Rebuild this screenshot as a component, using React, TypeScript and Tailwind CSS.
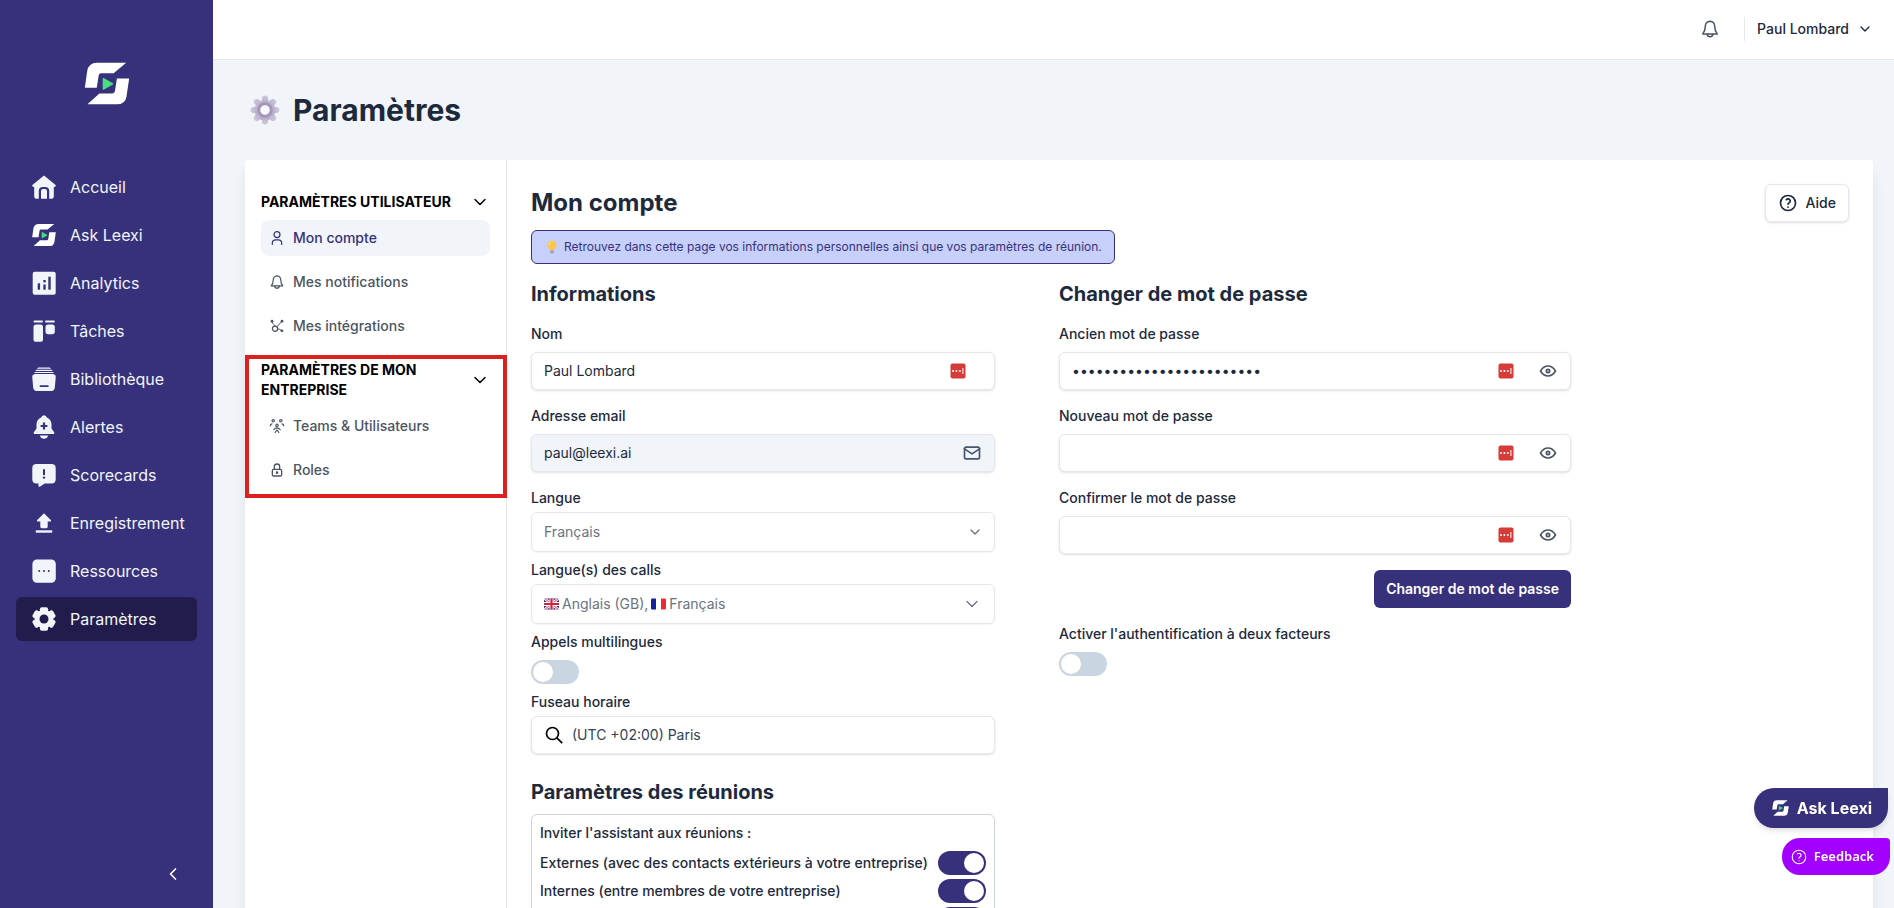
import type { ReactNode } from "react";
import { ChevronDown, ChevronLeft } from "lucide-react";
import { TbEye, TbHelp, TbLock, TbMail } from "react-icons/tb";

function LeexiLogo({ className }: { className?: string }) {
  return (
    <svg viewBox="0 0 136 130" className={className} aria-hidden>
      <path d="M126 2 88 34H50q-6 0-7 6l-6 38H1L8 28Q12 2 38 2Z" fill="#fff" />
      <path d="M98 50h37l-8 54q-4 24-29 24H9l36-33h39q7 0 8-7Z" fill="#fff" />
      <path d="M57 50v32l28-16Z" fill="#4ade80" stroke="#4ade80" strokeWidth="4" strokeLinejoin="round" />
    </svg>
  );
}

function NavSvg({ children }: { children: ReactNode }) {
  return (
    <svg viewBox="0 0 24 24" className="size-6 shrink-0" fill="#f1f5f9" aria-hidden>
      {children}
    </svg>
  );
}

const navItems: { label: string; icon: ReactNode; active?: boolean }[] = [
  {
    label: "Accueil",
    icon: (
      <NavSvg>
        <path d="M12 .5 23.6 10q.5 1.6-1 2h-.8v9.6q0 2.2-2.2 2.2h-2.4V16q0-4-4-4h-2.4q-4 0-4 4v7.8H4.4q-2.2 0-2.2-2.2V12h-.8q-1.5-.4-1-2Z" />
        <path d="M9 23.8V16q0-2 2-2h2q2 0 2 2v7.8Z" />
      </NavSvg>
    ),
  },
  { label: "Ask Leexi", icon: <LeexiLogo className="size-6 shrink-0" /> },
  {
    label: "Analytics",
    icon: (
      <NavSvg>
        <rect x="0.7" y="0.7" width="23" height="23" rx="2" />
        <g fill="#37317c">
          <rect x="5.7" y="12.3" width="2.4" height="6.4" />
          <rect x="11.3" y="9" width="2.4" height="2.4" />
          <rect x="11.3" y="13.5" width="2.4" height="5.2" />
          <rect x="16.3" y="5.7" width="2.4" height="13" />
        </g>
      </NavSvg>
    ),
  },
  {
    label: "Tâches",
    icon: (
      <NavSvg>
        <rect x="1.5" y="1.4" width="9.5" height="2.2" rx="1" />
        <rect x="13" y="1.4" width="9.8" height="2.2" rx="1" />
        <rect x="1.5" y="5.4" width="9.5" height="17.4" rx="2.6" />
        <rect x="13.5" y="5.4" width="9.3" height="9.8" rx="2.6" />
      </NavSvg>
    ),
  },
  {
    label: "Bibliothèque",
    icon: (
      <NavSvg>
        <path d="M6.5.4h11q1.2.2 1.6 1.3H4.9Q5.3.6 6.5.4ZM4.6 2.7h14.8q1 .2 1.3 1.2H3.3q.3-1 1.3-1.2ZM3.3 4.9h17.4q1 .2 1.3 1.2H2q.3-1 1.3-1.2Z" />
        <path d="M3 7.1h18q3 .5 2.7 3.4l-.9 10.3q-.4 3-3.3 3.2h-15q-2.9-.2-3.3-3.2L.3 10.5Q0 7.6 3 7.1Z" />
        <rect x="7.5" y="18.3" width="9.3" height="1.6" rx="0.8" fill="#37317c" />
      </NavSvg>
    ),
  },
  {
    label: "Alertes",
    icon: (
      <NavSvg>
        <path d="M12 .2q2.3.2 2.8 2.3 4.2 1.7 4.7 6.5v4.5l2.8 4q.4 1.5-1 1.5H2.7q-1.4 0-1-1.5l2.8-4V9Q5 4.2 9.2 2.500 9.7.4 12 .2Z" />
        <path d="M7.8 20.6h8.4Q15 23.8 12 23.8t-4.2-3.2Z" />
        <path d="M10.9 7.6h2.2v2.3h2.3v2.2h-2.3v2.3h-2.2v-2.3H8.6V9.9h2.3Z" fill="#37317c" />
      </NavSvg>
    ),
  },
  {
    label: "Scorecards",
    icon: (
      <NavSvg>
        <path d="M4.5 1h15q4.2 0 4.2 4.2v11q0 4.2-4.2 4.2h-6.8l-4.9 3.3q-1.3.6-1.3-.9v-2.4h-2Q.3 20.4.3 16.2v-11Q.3 1 4.5 1Z" />
        <rect x="11" y="6" width="2" height="6.3" rx="0.8" fill="#37317c" />
        <circle cx="12" cy="14.6" r="1.2" fill="#37317c" />
      </NavSvg>
    ),
  },
  {
    label: "Enregistrement",
    icon: (
      <NavSvg>
        <path d="M12 2.2 19 9.3q.5 1.2-.8 1.2h-2.5v5.3q0 1.4-1.4 1.4H9.7q-1.4 0-1.4-1.4v-5.3H5.8q-1.3 0-.8-1.2Z" />
        <rect x="3.8" y="19.3" width="16.4" height="2.4" />
      </NavSvg>
    ),
  },
  {
    label: "Ressources",
    icon: (
      <NavSvg>
        <rect x="0.4" y="0.4" width="23.4" height="23.4" rx="4.5" />
        <g fill="#37317c">
          <circle cx="7.2" cy="12" r="1" />
          <circle cx="12" cy="12" r="1" />
          <circle cx="16.8" cy="12" r="1" />
        </g>
      </NavSvg>
    ),
  },
  {
    label: "Paramètres",
    icon: (
      <NavSvg>
        <circle cx="12" cy="12" r="9.3" />
        <rect x="7.9" y="0.2" width="8.2" height="23.6" rx="2" />
        <rect x="7.9" y="0.2" width="8.2" height="23.6" rx="2" transform="rotate(60 12 12)" />
        <rect x="7.9" y="0.2" width="8.2" height="23.6" rx="2" transform="rotate(120 12 12)" />
        <circle cx="12" cy="12" r="4.5" fill="#211c4b" />
      </NavSvg>
    ),
    active: true,
  },
];

function LineSvg({ className, children }: { className?: string; children: ReactNode }) {
  return (
    <svg
      viewBox="0 0 16 16"
      className={className}
      fill="none"
      stroke="currentColor"
      strokeWidth="1.2"
      strokeLinecap="round"
      strokeLinejoin="round"
      aria-hidden
    >
      {children}
    </svg>
  );
}

function UserIcon() {
  return (
    <LineSvg className="size-4">
      <circle cx="8" cy="4.6" r="3" />
      <path d="M3.3 14.5v-1.3q0-3.4 3.4-3.4h2.6q3.4 0 3.4 3.4v1.3" />
    </LineSvg>
  );
}

function BellIcon({ className = "size-4" }: { className?: string }) {
  return (
    <LineSvg className={className}>
      <path d="M8 1.8q3.7.3 3.8 4.4 0 3.4 2 5.700H2.2q2-2.300 2-5.700Q4.300 2.100 8 1.800Z" />
      <path d="M5.700 12.100q.2 2.100 2.300 2.100t2.300-2.100" />
    </LineSvg>
  );
}

function IntegrationsIcon() {
  return (
    <LineSvg className="size-4">
      <circle cx="6" cy="10.8" r="2.6" />
      <g fill="currentColor" stroke="none">
        <circle cx="3" cy="3.2" r="1.4" />
        <circle cx="13" cy="3.2" r="1.4" />
        <circle cx="12.9" cy="12.8" r="1.4" />
      </g>
      <path d="M3 3.2q0 2.600 1.800 3.200 1.200.6 1.200 1.800M7.800 8.900 13 3.200M8.600 10.800q2.600-.1 4 1.800" strokeWidth="1" />
    </LineSvg>
  );
}

function TeamIcon() {
  return (
    <LineSvg className="size-4">
      <circle cx="4.2" cy="2.8" r="1.2" />
      <circle cx="11.8" cy="2.8" r="1.2" />
      <circle cx="8" cy="7.4" r="1.2" />
      <path d="M1.300 7.800q0-1.700 1.700-1.900M14.700 7.800q0-1.700-1.700-1.900M4.800 11.800q.8-1.900 3.200-2 2.400.1 3.200 2M8 12l-1.800 2.400M8 12l1.800 2.400" />
    </LineSvg>
  );
}

function SearchIcon() {
  return (
    <svg viewBox="0 0 20 20" className="size-5" fill="none" stroke="#000" strokeWidth="1.7" aria-hidden>
      <circle cx="8.500" cy="8.500" r="6" />
      <path d="m12.800 12.800 5.400 5.400" />
    </svg>
  );
}

type SettingsLink = { label: string; icon: ReactNode; active?: boolean };

const userLinks: SettingsLink[] = [
  { label: "Mon compte", icon: <UserIcon />, active: true },
  { label: "Mes notifications", icon: <BellIcon /> },
  { label: "Mes intégrations", icon: <IntegrationsIcon /> },
];

const companyLinks: SettingsLink[] = [
  { label: "Teams & Utilisateurs", icon: <TeamIcon /> },
  { label: "Roles", icon: <TbLock className="size-4" aria-hidden /> },
];

function SettingsGroup({ title, links }: { title: string; links: SettingsLink[] }) {
  return (
    <section>
      <button
        type="button"
        className="flex w-full items-center justify-between text-left text-sm font-bold text-black uppercase"
      >
        <span className="max-w-[195px]">{title}</span>
        <ChevronDown className="size-5" strokeWidth={1.75} aria-hidden />
      </button>
      <ul className="mt-2 space-y-2">
        {links.map((link) => (
          <li key={link.label}>
            <a
              href="#"
              className={
                link.active
                  ? "flex h-9 items-center gap-2 rounded-lg bg-slate-100 px-2 text-sm font-medium text-[#37317c]"
                  : "flex h-9 items-center gap-2 rounded-lg px-2 text-sm font-medium text-[#4b5563]"
              }
            >
              {link.icon}
              {link.label}
            </a>
          </li>
        ))}
      </ul>
    </section>
  );
}

function GearEmoji() {
  return (
    <svg viewBox="0 0 32 32" className="size-8" aria-hidden>
      <defs>
        <linearGradient id="gear" x1="0" y1="0" x2="0" y2="1">
          <stop offset="0" stopColor="#cfcad9" />
          <stop offset="1" stopColor="#b3a6cc" />
        </linearGradient>
      </defs>
      <g fill="url(#gear)">
        <circle cx="16" cy="16" r="10.5" />
        {[0, 45, 90, 135, 180, 225, 270, 315].map((angle) => (
          <rect key={angle} x="13" y="1.5" width="6" height="9" rx="3" transform={`rotate(${angle} 16 16)`} />
        ))}
      </g>
      <circle cx="16" cy="16" r="6.3" fill="#f8fafc" stroke="#a396b6" strokeWidth="3" />
    </svg>
  );
}

function BulbEmoji() {
  return (
    <svg viewBox="0 0 16 16" className="size-4" aria-hidden>
      <path d="M8 1.500q4.300.3 4.400 4.300 0 2-1.500 3.600-.7.800-.9 1.900H6q-.2-1.100-.9-1.900-1.500-1.600-1.500-3.600Q3.700 1.800 8 1.500Z" fill="#fdc64b" />
      <path d="M6.500 3q-1.500.8-1.500 2.500" stroke="#fff0b8" fill="none" strokeLinecap="round" />
      <path d="M6.200 11.300h3.600v2q-.3 1.400-1.800 1.400t-1.800-1.400Z" fill="#a99bb8" />
    </svg>
  );
}

function FlagGB() {
  return (
    <svg viewBox="0 0 15 12" className="h-3 w-[15px]" aria-hidden>
      <clipPath id="gb">
        <rect y="0.5" width="15" height="11" rx="1.5" />
      </clipPath>
      <g clipPath="url(#gb)">
        <rect width="15" height="12" fill="#26337f" />
        <path d="m0 0 15 12M15 0 0 12" stroke="#fff" strokeWidth="2.6" />
        <path d="m0 0 15 12M15 0 0 12" stroke="#d6213f" strokeWidth="0.9" />
        <path d="M7.500 0v12M0 6h15" stroke="#fff" strokeWidth="4" />
        <path d="M7.500 0v12M0 6h15" stroke="#d6213f" strokeWidth="2.2" />
      </g>
    </svg>
  );
}

function FlagFR() {
  return (
    <svg viewBox="0 0 15 12" className="h-3 w-[15px]" aria-hidden>
      <clipPath id="fr">
        <rect y="0.5" width="15" height="11" rx="1" />
      </clipPath>
      <g clipPath="url(#fr)">
        <rect width="5" height="12" fill="#12239e" />
        <rect x="5" width="5" height="12" fill="#fff" />
        <rect x="10" width="5" height="12" fill="#ed2b38" />
      </g>
    </svg>
  );
}

function PasswordManagerIcon() {
  return (
    <svg viewBox="0 0 16 16" className="size-4" aria-hidden>
      <rect x="0.5" y="0.5" width="15" height="15" rx="2" fill="#d63b38" />
      <g fill="#fff">
        <circle cx="3" cy="8" r="1" />
        <circle cx="6.4" cy="8" r="1" />
        <circle cx="9.8" cy="8" r="1" />
        <rect x="12.4" y="5" width="1" height="6" />
      </g>
    </svg>
  );
}

function fieldClassName() {
  return "flex h-[38px] items-center rounded-md border border-gray-200 bg-white pl-3 shadow-sm";
}

function Label({ id, children }: { id: string; children: ReactNode }) {
  return (
    <label htmlFor={id} className="block text-sm font-medium text-slate-800">
      {children}
    </label>
  );
}

function PasswordField({ id, label, value }: { id: string; label: string; value?: string }) {
  return (
    <div>
      <Label id={id}>{label}</Label>
      <div className={`${fieldClassName()} mt-2 pr-3`}>
        <input
          id={id}
          type="password"
          defaultValue={value}
          className="min-w-0 flex-1 text-sm text-slate-800 outline-none"
        />
        <PasswordManagerIcon />
        <button type="button" aria-label="Afficher le mot de passe" className="ml-6 text-[#4b5563]">
          <TbEye className="size-5" aria-hidden />
        </button>
      </div>
    </div>
  );
}

function Toggle({ id, label, defaultChecked }: { id: string; label?: string; defaultChecked?: boolean }) {
  return (
    <input
      id={id}
      type="checkbox"
      role="switch"
      aria-label={label}
      defaultChecked={defaultChecked}
      className="block h-6 w-12 shrink-0 appearance-none rounded-full bg-slate-300 p-0.5 before:block before:size-5 before:rounded-full before:bg-white checked:bg-[#37317c] checked:before:translate-x-6"
    />
  );
}

const meetingOptions = [
  { id: "externes", label: "Externes (avec des contacts extérieurs à votre entreprise)" },
  { id: "internes", label: "Internes (entre membres de votre entreprise)" },
];

function InformationForm() {
  return (
    <div className="w-full max-w-[464px]">
      <h3 className="text-xl font-bold text-slate-800">Informations</h3>
      <div className="mt-4 space-y-4">
        <div>
          <Label id="nom">Nom</Label>
          <div className={`${fieldClassName()} mt-2 pr-7`}>
            <input
              id="nom"
              type="text"
              defaultValue="Paul Lombard"
              className="min-w-0 flex-1 text-sm text-slate-800 outline-none"
            />
            <PasswordManagerIcon />
          </div>
        </div>
        <div>
          <Label id="email">Adresse email</Label>
          <div className="mt-2 flex h-[38px] items-center rounded-md border border-gray-200 bg-slate-100 pr-3 pl-3 shadow-sm">
            <input
              id="email"
              type="email"
              readOnly
              defaultValue="paul@leexi.ai"
              className="min-w-0 flex-1 text-sm text-slate-800 outline-none"
            />
            <TbMail className="size-5 text-slate-600" aria-hidden />
          </div>
        </div>
      </div>

      <div className="mt-4 space-y-2">
        <div>
          <Label id="langue">Langue</Label>
          <div className="mt-1 grid">
            <select
              id="langue"
              defaultValue="fr"
              className="col-start-1 row-start-1 h-10 w-full appearance-none rounded-md border border-gray-200 bg-white px-3 text-sm text-gray-500 shadow-xs outline-none"
            >
              <option value="fr">Français</option>
              <option value="en">Anglais</option>
            </select>
            <ChevronDown
              className="pointer-events-none col-start-1 row-start-1 mr-3 size-4 self-center justify-self-end text-gray-500"
              aria-hidden
            />
          </div>
        </div>
        <div>
          <Label id="langues-calls">Langue(s) des calls</Label>
          <button
            id="langues-calls"
            type="button"
            className="mt-1 flex h-10 w-full items-center gap-[3px] rounded-md border border-gray-200 bg-white px-3 text-sm text-gray-500 shadow-xs"
          >
            <FlagGB />
            <span>Anglais (GB),</span>
            <FlagFR />
            <span>Français</span>
            <ChevronDown className="ml-auto size-5" strokeWidth={1.5} aria-hidden />
          </button>
        </div>
        <div>
          <Label id="multilingue">Appels multilingues</Label>
          <div className="mt-2">
            <Toggle id="multilingue" />
          </div>
        </div>
        <div>
          <Label id="fuseau">Fuseau horaire</Label>
          <div className={`${fieldClassName()} mt-1 gap-2 pr-3`}>
            <SearchIcon />
            <input
              id="fuseau"
              type="text"
              defaultValue="(UTC +02:00) Paris"
              className="min-w-0 flex-1 text-sm text-slate-700 outline-none"
            />
          </div>
        </div>
      </div>

      <h3 className="mt-6 text-xl font-bold text-slate-800">Paramètres des réunions</h3>
      <div className="mt-2 rounded-md border border-gray-300 p-2">
        <p className="text-sm font-medium text-slate-800">Inviter l'assistant aux réunions :</p>
        <div className="mt-2 space-y-1">
          {meetingOptions.map((option) => (
            <div key={option.id} className="flex items-center justify-between">
              <Label id={option.id}>{option.label}</Label>
              <Toggle id={option.id} defaultChecked />
            </div>
          ))}
          <div className="flex justify-end">
            <Toggle id="organisateur" label="Organisateur" defaultChecked />
          </div>
        </div>
      </div>
    </div>
  );
}

function PasswordForm() {
  return (
    <div className="w-full max-w-lg">
      <h3 className="text-xl font-bold text-slate-800">Changer de mot de passe</h3>
      <div className="mt-4 space-y-4">
        <PasswordField id="ancien" label="Ancien mot de passe" value="motdepassetressecret1234" />
        <PasswordField id="nouveau" label="Nouveau mot de passe" />
        <PasswordField id="confirmer" label="Confirmer le mot de passe" />
        <button
          type="button"
          className="ml-auto block h-[38px] rounded-md bg-[#37317c] px-3 text-sm font-semibold text-white"
        >
          Changer de mot de passe
        </button>
      </div>
      <div className="mt-4 space-y-2">
        <Label id="deux-facteurs">Activer l'authentification à deux facteurs</Label>
        <Toggle id="deux-facteurs" />
      </div>
    </div>
  );
}

function Sidebar() {
  return (
    <aside className="flex w-[213px] shrink-0 flex-col bg-[#37317c] px-4">
      <a href="#" aria-label="Leexi" className="mt-[62px] flex justify-center">
        <LeexiLogo className="h-[43px] w-[46px]" />
      </a>
      <nav className="mt-15 space-y-1">
        {navItems.map((item) => (
          <a
            key={item.label}
            href="#"
            className={
              item.active
                ? "flex h-11 items-center gap-3.5 rounded-md bg-[#211c4b] pl-4 text-base text-slate-100"
                : "flex h-11 items-center gap-3.5 rounded-md pl-4 text-base text-slate-100"
            }
          >
            {item.icon}
            {item.label}
          </a>
        ))}
      </nav>
      <button type="button" aria-label="Réduire le menu" className="mt-auto mr-3.5 mb-6 self-end text-white">
        <ChevronLeft className="size-5" aria-hidden />
      </button>
    </aside>
  );
}

export default function App() {
  return (
    <div className="flex h-screen overflow-hidden bg-slate-100 font-['Inter',sans-serif]">
      <Sidebar />
      <div className="flex min-w-0 flex-1 flex-col">
        <header className="flex h-15 shrink-0 items-center justify-end border-b border-gray-200 bg-white pr-[21px] pb-0.5">
          <button type="button" aria-label="Notifications" className="text-[#4b5563]">
            <BellIcon className="size-5" />
          </button>
          <div className="ml-6 h-6 w-px bg-gray-200" />
          <button type="button" className="ml-3 flex items-center gap-2 text-sm font-medium text-slate-800">
            Paul Lombard
            <ChevronDown className="size-4" aria-hidden />
          </button>
        </header>

        <main className="flex min-h-0 flex-1 flex-col pr-[21px] pl-8">
          <h1 className="flex h-[100px] shrink-0 items-center gap-3 pl-1 text-3xl font-bold text-slate-800">
            <GearEmoji />
            Paramètres
          </h1>
          <div className="flex min-h-[1000px] rounded bg-white shadow-lg">
            <div className="relative w-[262px] shrink-0 space-y-4 border-r border-gray-200 px-4 pt-8">
              <SettingsGroup title="Paramètres utilisateur" links={userLinks} />
              <SettingsGroup title="Paramètres de mon entreprise" links={companyLinks} />
              <div className="pointer-events-none absolute inset-x-0 top-[195px] -mr-px h-[143px] border-4 border-[#dc2020]" />
            </div>

            <div className="min-w-0 flex-1 px-6 pt-6">
              <div className="flex h-[38px] items-center justify-between">
                <h2 className="text-2xl font-bold text-slate-800">Mon compte</h2>
                <button
                  type="button"
                  className="flex h-[38px] items-center gap-2 rounded-md border border-gray-200 bg-white px-3 text-sm font-medium text-slate-800 shadow-sm"
                >
                  <TbHelp className="size-5" aria-hidden />
                  Aide
                </button>
              </div>
              <p className="mt-2 flex h-[34px] w-fit items-center gap-1 rounded-md border border-[#37317c] bg-[#c7cffb] px-3 text-xs text-[#37317c]">
                <BulbEmoji />
                Retrouvez dans cette page vos informations personnelles ainsi que vos paramètres de réunion.
              </p>
              <div className="mt-4 flex gap-16">
                <InformationForm />
                <PasswordForm />
              </div>
            </div>
          </div>
        </main>
      </div>

      <div className="fixed right-1 bottom-[33px] flex flex-col items-end gap-2.5">
        <button
          type="button"
          className="mr-0.5 flex h-10 items-center gap-2 rounded-l-[20px] rounded-br-[20px] bg-[#37317c] pr-4 pl-4.5 text-base font-bold text-white shadow-md"
        >
          <LeexiLogo className="h-4 w-[17px]" />
          Ask Leexi
        </button>
        <button
          type="button"
          className="flex h-[37px] items-center gap-1.5 rounded-l-[18px] rounded-tr rounded-br-[18px] bg-[#a200ff] pr-4 pl-2 font-['Noto_Sans',sans-serif] text-[13px] font-semibold text-white"
        >
          <TbHelp className="size-[18px]" strokeWidth={1.5} aria-hidden />
          Feedback
        </button>
      </div>
    </div>
  );
}
